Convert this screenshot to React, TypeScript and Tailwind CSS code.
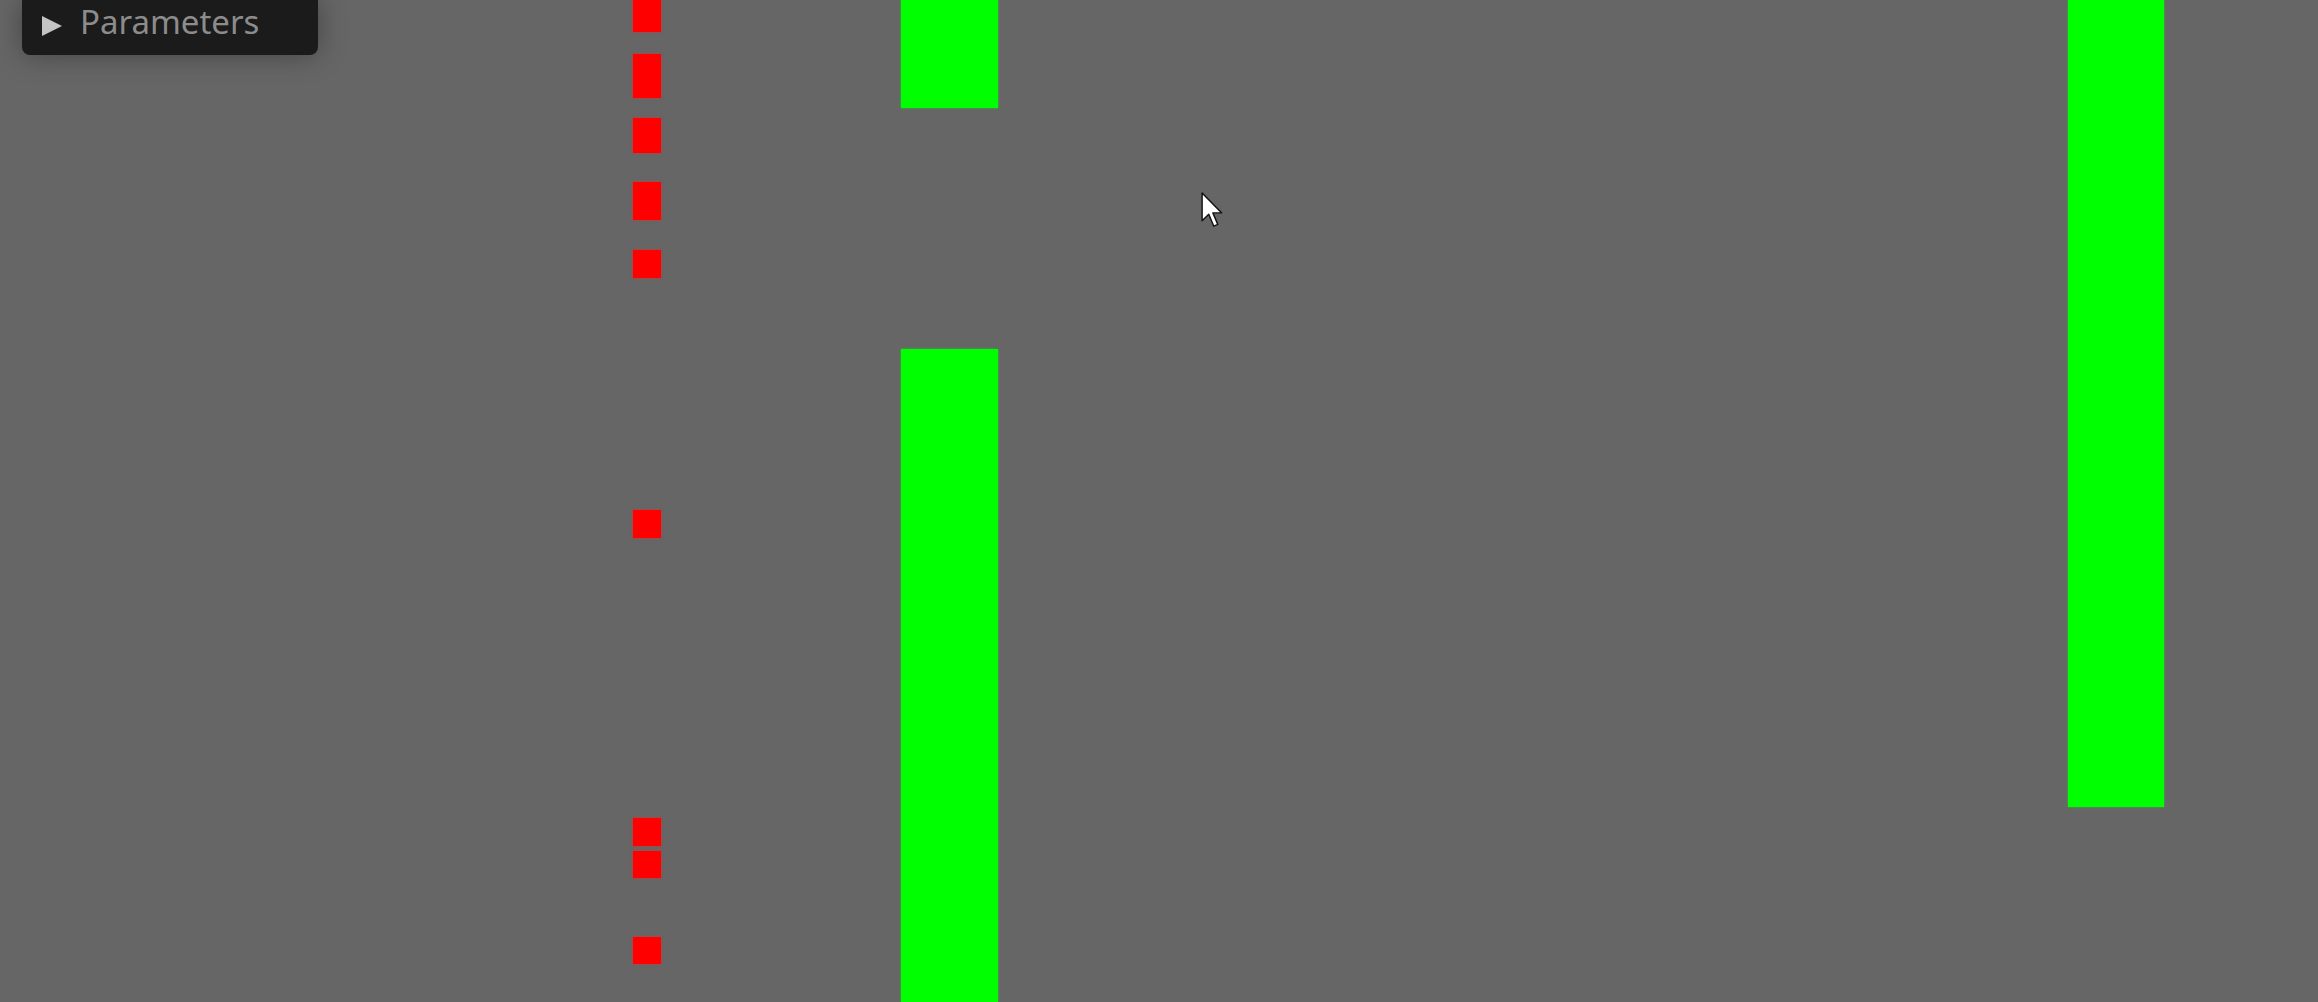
import React from "react";

type Box = { x: number; y: number; w: number; h: number };

// red blocks, all in one column
const blocks: Box[] = [
  { x: 633, y: 0, w: 28, h: 32 },
  { x: 633, y: 54, w: 28, h: 44 },
  { x: 633, y: 118, w: 28, h: 35 },
  { x: 633, y: 182, w: 28, h: 38 },
  { x: 633, y: 250, w: 28, h: 28 },
  { x: 633, y: 510, w: 28, h: 28 },
  { x: 633, y: 818, w: 28, h: 28 },
  { x: 633, y: 851, w: 28, h: 27 },
  { x: 633, y: 937, w: 28, h: 27 },
];

const pipes: Box[] = [
  { x: 901, y: 0, w: 97, h: 108 },
  { x: 901, y: 349, w: 97, h: 653 },
  { x: 2068, y: 0, w: 96, h: 807 },
];

function Cursor() {
  return (
    <svg width="22" height="36" viewBox="0 0 12 20" className="absolute left-[1201px] top-[192px]">
      <path
        d="M0.5 0.5 L0.5 16 L4.2 12.4 L7 19 L9.2 18 L6.5 11.6 L11.4 11.6 Z"
        fill="#ffffff"
        stroke="#111111"
        strokeWidth="0.8"
        strokeLinejoin="round"
      />
    </svg>
  );
}

export default function App() {
  return (
    <div className="relative h-[1002px] w-full overflow-hidden bg-[#666666]">
      {pipes.map((p, i) => (
        <div
          key={"p" + i}
          className="absolute bg-[#00ff00] shadow-[0_0_2px_#22cc22]"
          style={{ left: p.x, top: p.y, width: p.w, height: p.h }}
        />
      ))}
      {blocks.map((b, i) => (
        <div
          key={"b" + i}
          className="absolute bg-[#ff0000] shadow-[0_0_2px_#ff2020]"
          style={{ left: b.x, top: b.y, width: b.w, height: b.h }}
        />
      ))}

      <div className="absolute left-[22px] top-0 flex h-[55px] w-[296px] items-start rounded-b-lg bg-[#1b1b1b] pl-[19px] shadow-[0_0_28px_rgba(0,0,0,0.35)]">
        <svg width="22" height="22" viewBox="0 0 22 22" className="mt-[15px]">
          <polygon points="1,1 21,11 1,21" fill="#c4c4c4" />
        </svg>
        <span className="ml-[17px] mt-[5px] font-['Noto_Sans',sans-serif] text-[33px] leading-none text-[#8c8c8c]">
          Parameters
        </span>
      </div>

      <Cursor />
    </div>
  );
}
